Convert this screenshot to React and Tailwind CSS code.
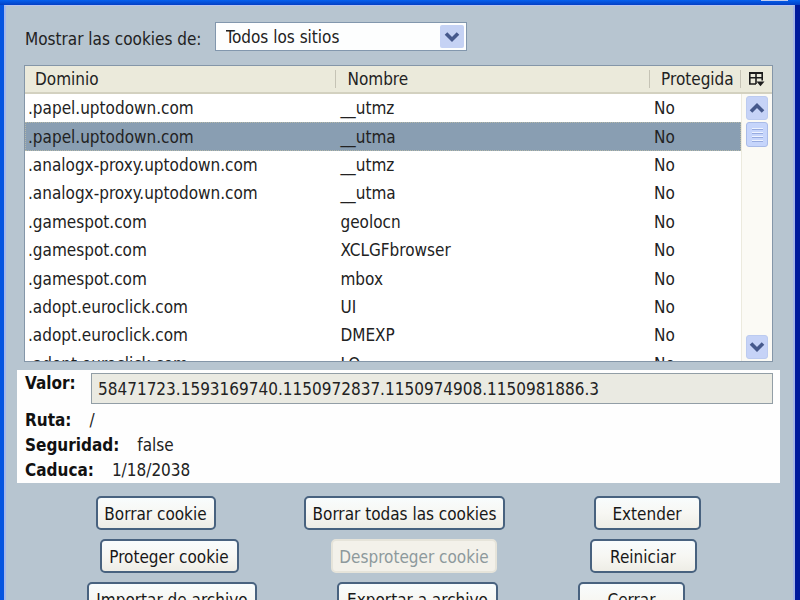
import React, { useState } from 'react';

const cookies = [
  { domain: '.papel.uptodown.com', name: '__utmz' },
  { domain: '.papel.uptodown.com', name: '__utma' },
  { domain: '.analogx-proxy.uptodown.com', name: '__utmz' },
  { domain: '.analogx-proxy.uptodown.com', name: '__utma' },
  { domain: '.gamespot.com', name: 'geolocn' },
  { domain: '.gamespot.com', name: 'XCLGFbrowser' },
  { domain: '.gamespot.com', name: 'mbox' },
  { domain: '.adopt.euroclick.com', name: 'UI' },
  { domain: '.adopt.euroclick.com', name: 'DMEXP' },
  { domain: '.adopt.euroclick.com', name: 'LO' },
];

const Chevron = ({ up }) => (
  <svg viewBox="0 0 16 12" className="w-4 h-3" fill="none" stroke="#46598c" strokeWidth="3.6">
    <path d={up ? 'M2 9.5 L8 3.5 L14 9.5' : 'M2 2.5 L8 8.5 L14 2.5'} />
  </svg>
);

const XpButton = ({ width, disabled, children }) => (
  <button
    type="button"
    disabled={disabled}
    className={`${width} h-[34px] shrink-0 rounded-[5px] border-2 pt-0.5 leading-7 whitespace-nowrap ${
      disabled
        ? 'border-[#e6e4da] bg-[#f3f1ea] text-[#8d999c]'
        : 'border-[#48627f] bg-gradient-to-b from-[#f8fcfd] via-[#f7f7f3] to-[#eeede6] text-[#181818]'
    }`}
  >
    {children}
  </button>
);

const CookieTable = ({ selected, onSelect }) => (
  <div className="flex h-[297px] overflow-hidden border border-[#8496a8] bg-white">
    <div className="flex-1 min-w-0">
      <table className="w-full h-[312px] table-fixed border-separate border-spacing-0 text-left">
        <thead>
          <tr className="h-7 bg-[#ebeadb]">
            <th className="w-[43.5%] p-0 font-normal border-b-2 border-[#d3d1c0]">
              <div className="h-[18px] pl-[10px] leading-[18px] border-r border-[#c5c3b5]">Dominio</div>
            </th>
            <th className="w-[43.8%] p-0 font-normal border-b-2 border-[#d3d1c0]">
              <div className="h-[18px] pl-[11px] leading-[18px] border-r border-[#c5c3b5]">Nombre</div>
            </th>
            <th className="p-0 font-normal border-b-2 border-[#d3d1c0]">
              <div className="h-[18px] pl-[11px] leading-[18px] border-r border-[#c5c3b5]">Protegida</div>
            </th>
          </tr>
        </thead>
        <tbody>
          {cookies.map((c, i) => (
            <tr
              key={i}
              onClick={() => onSelect(i)}
              className={i === selected ? 'bg-[#899eb2] outline-1 -outline-offset-1 outline-dotted outline-[#b5b8a8]' : ''}
            >
              <td className="p-0 pl-[3px] leading-6">{c.domain}</td>
              <td className="p-0 pl-[4px] leading-6">{c.name}</td>
              <td className="p-0 pl-[4px] leading-6">No</td>
            </tr>
          ))}
        </tbody>
      </table>
    </div>

    {/* Column picker and scrollbar */}
    <div className="w-[31px] shrink-0 flex flex-col bg-[#fbfaf5]">
      <button
        type="button"
        aria-label="Columnas"
        className="h-7 shrink-0 flex items-center justify-center bg-[#ebeadb] border-b-2 border-[#d3d1c0]"
      >
        <svg viewBox="0 0 17 16" className="w-[17px] h-4" fill="none" stroke="#1c1c1c" strokeWidth="1.6">
          <path d="M8 13H1.8V2H14.2V9.5M1.8 6.8H14.2M8 2V13" />
          <path d="M1 2H15" strokeWidth="2" />
          <path d="M8.5 10.5H16.5L12.5 15.2Z" fill="#1c1c1c" stroke="none" />
        </svg>
      </button>
      <div className="flex-1 min-h-0 flex flex-col items-center border-l border-[#eceade] pt-0.5">
        <button
          type="button"
          aria-label="Subir"
          className="w-[22px] h-6 shrink-0 flex items-center justify-center rounded-[3px] border border-[#bccbf0] bg-[#c6d3f7]"
        >
          <Chevron up />
        </button>
        <div className="w-[22px] h-[25px] shrink-0 mt-0.5 flex flex-col items-center justify-center gap-0.5 rounded-[3px] border border-[#a9bbe8] bg-[#c6d5fb]">
          <span className="w-[11px] h-px bg-[#eef3ff] border-b border-[#97abe0] box-content" />
          <span className="w-[11px] h-px bg-[#eef3ff] border-b border-[#97abe0] box-content" />
          <span className="w-[11px] h-px bg-[#eef3ff] border-b border-[#97abe0] box-content" />
          <span className="w-[11px] h-px bg-[#eef3ff] border-b border-[#97abe0] box-content" />
        </div>
        <button
          type="button"
          aria-label="Bajar"
          className="w-[22px] h-6 shrink-0 mt-auto mb-0.5 flex items-center justify-center rounded-[3px] border border-[#bccbf0] bg-[#c6d3f7]"
        >
          <Chevron />
        </button>
      </div>
    </div>
  </div>
);

const App = () => {
  const [selected, setSelected] = useState(1);

  return (
    <div className="h-screen overflow-hidden flex flex-col bg-[#b7c5d0] text-[#222] text-[17px] font-['DejaVu_Sans_Condensed','DejaVu_Sans',sans-serif]">
      {/* Bottom edge of the title bar */}
      <div className="h-[5px] shrink-0 flex justify-end items-start pr-3 bg-gradient-to-b from-[#0660ee] to-[#0440c4]">
        <div className="w-[27px] h-px bg-[#c3cdf0]" />
      </div>

      <div className="flex-1 min-h-0 flex border-l-4 border-r-[5px] border-l-[#0655e0] border-r-[#001a9c]">
        <main className="flex-1 min-w-0 border-x-2 border-t border-l-[#a3b8ec] border-r-[#a5b5e6] border-t-[#b9c4ee]">
          <div className="flex items-center gap-[13px] pl-[19px] pt-4">
            <label htmlFor="site-filter" className="pt-1 leading-6">Mostrar las cookies de:</label>
            <div className="relative w-[252px] h-[29px]">
              <select
                id="site-filter"
                className="appearance-none w-full h-full pl-[10px] pr-8 pt-0.5 bg-[#fdfefe] border border-[#8297ad] outline-none"
              >
                <option>Todos los sitios</option>
              </select>
              <span className="absolute right-[3px] top-[3px] w-6 h-[23px] flex items-center justify-center rounded-[2px] bg-[#c5d2f4] pointer-events-none">
                <Chevron />
              </span>
            </div>
          </div>

          <div className="pl-[18px] pr-5 pt-[14px]">
            <CookieTable selected={selected} onSelect={setSelected} />
          </div>

          <section className="mt-2 ml-[11px] mr-[13px] h-[113px] pl-2 pr-[7px] pt-[3px] bg-[#fefefe]">
            <div className="flex items-start">
              <label htmlFor="cookie-value" className="w-[66px] shrink-0 font-bold text-[#111] leading-5">
                Valor:
              </label>
              <input
                id="cookie-value"
                readOnly
                value="58471723.1593169740.1150972837.1150974908.1150981886.3"
                className="flex-1 min-w-0 h-[31px] pl-1.5 bg-[#eaeae2] border border-[#929ea6] outline-none"
              />
            </div>
            <dl className="mt-1 leading-[25px]">
              <div className="flex gap-[18px]">
                <dt className="font-bold text-[#111]">Ruta:</dt>
                <dd>/</dd>
              </div>
              <div className="flex gap-[18px]">
                <dt className="font-bold text-[#111]">Seguridad:</dt>
                <dd>false</dd>
              </div>
              <div className="flex gap-[18px]">
                <dt className="font-bold text-[#111]">Caduca:</dt>
                <dd>1/18/2038</dd>
              </div>
            </dl>
          </section>

          <div className="flex flex-col gap-[9px] pt-[13px] pl-px pr-1">
            <div className="flex justify-evenly">
              <XpButton width="w-[120px]">Borrar cookie</XpButton>
              <XpButton width="w-[201px]">Borrar todas las cookies</XpButton>
              <XpButton width="w-[107px]">Extender</XpButton>
            </div>
            <div className="flex justify-evenly">
              <XpButton width="w-[139px]">Proteger cookie</XpButton>
              <XpButton width="w-[166px]" disabled>Desproteger cookie</XpButton>
              <XpButton width="w-[107px]">Reiniciar</XpButton>
            </div>
            <div className="flex justify-evenly pr-6">
              <XpButton width="w-[170px]">Importar de archivo</XpButton>
              <XpButton width="w-[161px]">Exportar a archivo</XpButton>
              <XpButton width="w-[107px]">Cerrar</XpButton>
            </div>
          </div>
        </main>
      </div>
    </div>
  );
};

export default App;
